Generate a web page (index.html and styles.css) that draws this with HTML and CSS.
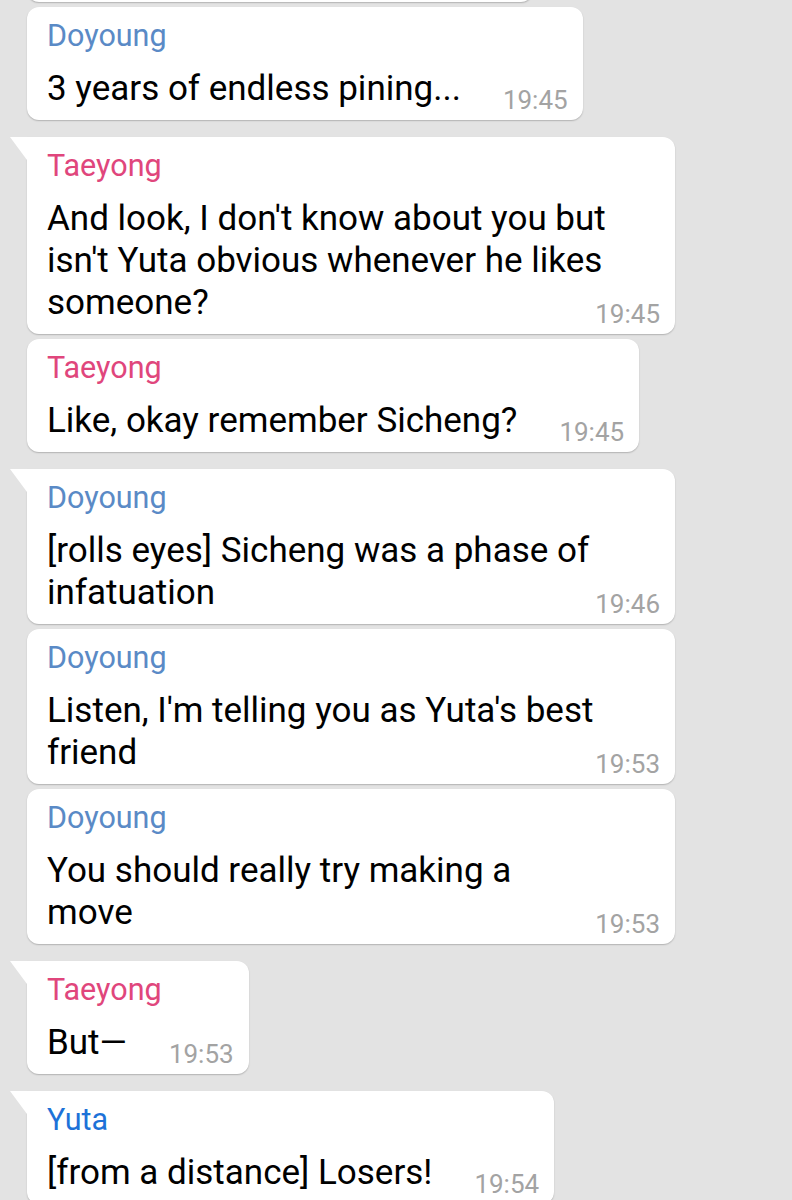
FILE: index.html
```html
<!DOCTYPE html>
<html>
<head>
<meta charset="utf-8">
<link rel="stylesheet" href="styles.css">
</head>
<body>
<div class="chat">
  <div class="group stub-group">
    <div class="bubble stub"></div>
    <div class="bubble">
      <div class="name doyoung">Doyoung</div>
      <div class="text">3 years of endless pining...<span class="time">19:45</span></div>
    </div>
  </div>
  <div class="group">
    <div class="bubble first full">
      <div class="name taeyong">Taeyong</div>
      <div class="text">And look, I don't know about you but<br>isn't Yuta obvious whenever he likes<br>someone?<span class="time">19:45</span></div>
    </div>
    <div class="bubble">
      <div class="name taeyong">Taeyong</div>
      <div class="text">Like, okay remember Sicheng?<span class="time">19:45</span></div>
    </div>
  </div>
  <div class="group">
    <div class="bubble first full">
      <div class="name doyoung">Doyoung</div>
      <div class="text">[rolls eyes] Sicheng was a phase of<br>infatuation<span class="time">19:46</span></div>
    </div>
    <div class="bubble full">
      <div class="name doyoung">Doyoung</div>
      <div class="text">Listen, I'm telling you as Yuta's best<br>friend<span class="time">19:53</span></div>
    </div>
    <div class="bubble full">
      <div class="name doyoung">Doyoung</div>
      <div class="text">You should really try making a<br>move<span class="time">19:53</span></div>
    </div>
  </div>
  <div class="group">
    <div class="bubble first">
      <div class="name taeyong">Taeyong</div>
      <div class="text">But—<span class="time">19:53</span></div>
    </div>
  </div>
  <div class="group">
    <div class="bubble first">
      <div class="name yuta">Yuta</div>
      <div class="text">[from a distance] Losers!<span class="time">19:54</span></div>
    </div>
  </div>
</div>
</body>
</html>
```
FILE: styles.css
```css
html, body {
  margin: 0;
  padding: 0;
  background: #e3e3e3;
  font-family: Roboto, "Noto Sans", sans-serif;
  overflow: hidden;
}

.chat {
  display: flex;
  flex-direction: column;
  align-items: flex-start;
  padding-left: 27px;
}

.group {
  display: flex;
  flex-direction: column;
  align-items: flex-start;
  gap: 5px;
  margin-top: 17px;
}

.stub-group {
  margin-top: -22px;
}

.bubble {
  position: relative;
  background: #ffffff;
  border-radius: 12px;
  box-shadow: 0 1px 1.5px rgba(0, 0, 0, 0.22);
  padding: 11px 15px 10px 20px;
  max-width: 648px;
  box-sizing: border-box;
}

.bubble.stub {
  width: 506px;
  height: 24px;
  padding: 0;
}

.bubble.full {
  width: 648px;
}

.bubble.first {
  border-top-left-radius: 0;
}

.bubble.first::before {
  content: "";
  position: absolute;
  left: -17px;
  top: 0;
  width: 17px;
  height: 23px;
  background: #ffffff;
  clip-path: polygon(0 0, 100% 0, 100% 100%);
}

.name {
  font-size: 30.5px;
  line-height: 36px;
  margin-bottom: 14px;
}

.doyoung { color: #5a8ac6; }
.taeyong { color: #e0467c; }
.yuta { color: #1d72d8; }

.text {
  font-size: 35px;
  line-height: 42px;
  color: #000000;
}

.time {
  float: right;
  position: relative;
  top: 11px;
  margin-left: 42px;
  font-size: 26px;
  line-height: 42px;
  color: #a3a3a3;
}
```
